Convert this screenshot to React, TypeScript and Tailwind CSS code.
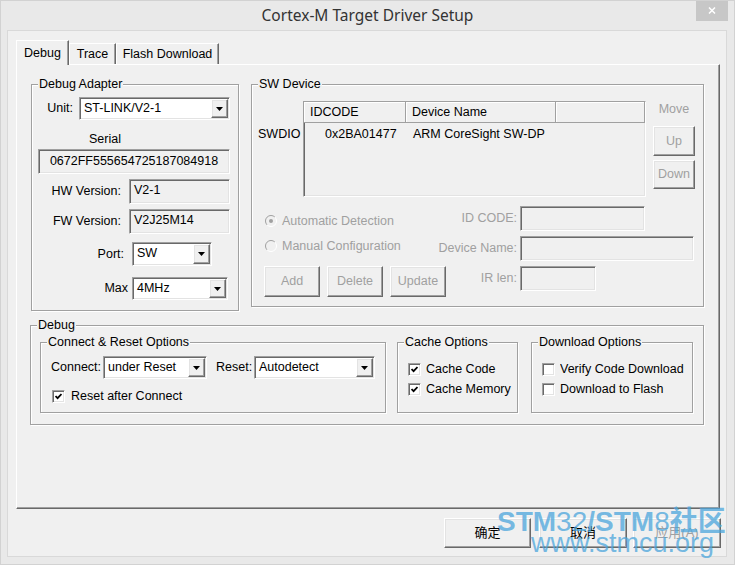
import React from 'react';

// classic 3D edges
const SUNKEN =
  'border border-t-[#a0a0a0] border-l-[#a0a0a0] border-r-white border-b-white shadow-[inset_1px_1px_0_#696969,inset_-1px_-1px_0_#e3e3e3]';
const RAISED =
  'border border-t-white border-l-white border-r-[#696969] border-b-[#696969] shadow-[inset_-1px_-1px_0_#a0a0a0,inset_1px_1px_0_#e3e3e3]';

function Group({ label, className, children }: { label: string; className: string; children?: React.ReactNode }) {
  return (
    <div className={`relative border border-[#a0a0a0] shadow-[inset_1px_1px_0_#fff,1px_1px_0_#fff] ${className}`}>
      <span className="absolute left-[6px] -top-[9px] bg-[#f0f0f0] px-px leading-[16px] whitespace-nowrap">{label}</span>
      {children}
    </div>
  );
}

function Combo({ value, className }: { value: string; className: string }) {
  return (
    <div className={`${SUNKEN} flex bg-white p-px ${className}`}>
      <span className="flex-1 overflow-hidden whitespace-nowrap pl-[3px] leading-[19px]">{value}</span>
      <span className={`${RAISED} flex w-[17px] items-center justify-center bg-[#f0f0f0]`}>
        <svg width="7" height="4" viewBox="0 0 7 4">
          <path d="M0 0h7L3.5 4z" fill="#000" />
        </svg>
      </span>
    </div>
  );
}

function Btn({ label, className, disabled }: { label: string; className: string; disabled?: boolean }) {
  return (
    <div
      className={`${RAISED} flex items-center justify-center bg-[#f0f0f0] ${disabled ? 'text-[#a0a0a0]' : 'text-black'} ${className}`}
    >
      {label}
    </div>
  );
}

function Check({ checked, label, labelClass }: { checked: boolean; label: string; labelClass?: string }) {
  return (
    <div className="flex h-[20px] items-center">
      <div className={`${SUNKEN} flex h-[13px] w-[13px] shrink-0 items-center justify-center bg-white`}>
        {checked && (
          <svg width="7" height="7" viewBox="0 0 7 7">
            <polyline points="0.5,3 2.6,5.2 6.5,1" fill="none" stroke="#000" strokeWidth="1.8" />
          </svg>
        )}
      </div>
      <span className={`ml-[5px] whitespace-nowrap ${labelClass ?? ''}`}>{label}</span>
    </div>
  );
}

function Radio({ checked, label }: { checked: boolean; label: string }) {
  return (
    <div className="flex items-center leading-[16px] text-[#a0a0a0]">
      <svg width="12" height="12" viewBox="0 0 12 12">
        <circle cx="6" cy="6" r="5.5" fill="#f0f0f0" />
        <path d="M2.1 9.9A5.5 5.5 0 0 1 9.9 2.1" stroke="#a0a0a0" fill="none" />
        <path d="M9.9 2.1A5.5 5.5 0 0 1 2.1 9.9" stroke="#fff" fill="none" />
        {checked && <circle cx="6" cy="6" r="2" fill="#a0a0a0" />}
      </svg>
      <span className="ml-[5px] whitespace-nowrap">{label}</span>
    </div>
  );
}

function Tab({ label, active, className }: { label: string; active?: boolean; className: string }) {
  return (
    <div
      className={`flex items-center justify-center border-t border-l border-r border-t-white border-l-white border-r-[#696969] bg-[#f0f0f0] shadow-[inset_-1px_0_0_#a0a0a0] ${
        active ? 'relative z-10 -mb-px h-[25px]' : 'h-[21px]'
      } ${className}`}
    >
      {label}
    </div>
  );
}

function DebugAdapter() {
  return (
    <Group label="Debug Adapter" className="h-[227px] w-[208px]">
      <div className="mt-[12px] flex h-[23px] items-center">
        <span className="w-[41px] text-right">Unit:</span>
        <Combo value="ST-LINK/V2-1" className="ml-[6px] h-[23px] w-[151px]" />
      </div>
      <div className="mt-[11px] pl-[57px] leading-[16px]">Serial</div>
      <div className={`${SUNKEN} mt-[2px] ml-[6px] flex h-[25px] w-[192px] items-center justify-center`}>
        0672FF555654725187084918
      </div>
      <div className="mt-[5px] flex h-[25px] items-center">
        <span className="w-[89px] text-right">HW Version:</span>
        <div className={`${SUNKEN} ml-[8px] h-[25px] w-[101px] pl-[4px] pt-[2px] leading-[16px]`}>V2-1</div>
      </div>
      <div className="mt-[5px] flex h-[25px] items-center">
        <span className="w-[89px] text-right">FW Version:</span>
        <div className={`${SUNKEN} ml-[8px] h-[25px] w-[101px] pl-[4px] pt-[2px] leading-[16px]`}>V2J25M14</div>
      </div>
      <div className="mt-[8px] flex h-[24px] items-center">
        <span className="w-[92px] text-right">Port:</span>
        <Combo value="SW" className="ml-[8px] h-[24px] w-[80px]" />
      </div>
      <div className="mt-[11px] flex h-[23px] items-center">
        <span className="w-[96px] text-right">Max</span>
        <Combo value="4MHz" className="ml-[4px] h-[23px] w-[96px]" />
      </div>
    </Group>
  );
}

function SwDevice() {
  const grey = 'text-[#a0a0a0]';
  const field = `${SUNKEN} h-[25px] bg-[#f0f0f0]`;
  return (
    <Group label="SW Device" className="ml-[12px] h-[223px] w-[453px]">
      <div className="mt-[16px] flex items-start pl-[6px]">
        <span className="mt-[25px] w-[45px] leading-[16px]">SWDIO</span>
        <div className={`${SUNKEN} h-[96px] w-[343px] bg-[#f0f0f0]`}>
          <div className="flex h-[21px]">
            {[
              ['IDCODE', 'w-[102px]'],
              ['Device Name', 'w-[150px]'],
              ['', 'flex-1'],
            ].map(([h, w], i) => (
              <div
                key={i}
                className={`${w} flex items-center border-r border-b border-[#a0a0a0] pl-[6px] pt-px shadow-[inset_1px_1px_0_#fff]`}
              >
                {h}
              </div>
            ))}
          </div>
          <div className="mt-[3px] flex leading-[16px]">
            <span className="w-[102px] pl-[21px]">0x2BA01477</span>
            <span className="pl-[7px]">ARM CoreSight SW-DP</span>
          </div>
        </div>
        <div className="ml-[7px] flex w-[42px] flex-col">
          <span className={`text-center leading-[16px] ${grey}`}>Move</span>
          <Btn label="Up" disabled className="mt-[9px] h-[30px]" />
          <Btn label="Down" disabled className="mt-[4px] h-[29px]" />
        </div>
      </div>

      <div className="mt-[9px] flex h-[25px]">
        <div className="flex-1 pl-[13px] pt-[7px]">
          <Radio checked label="Automatic Detection" />
        </div>
        <span className={`flex items-center whitespace-nowrap ${grey}`}>ID CODE:</span>
        <div className={`${field} ml-[3px] mr-[58px] w-[125px]`} />
      </div>
      <div className="mt-[5px] flex h-[25px]">
        <div className="flex-1 pl-[13px] pt-[2px]">
          <Radio checked={false} label="Manual Configuration" />
        </div>
        <span className={`flex items-center whitespace-nowrap ${grey}`}>Device Name:</span>
        <div className={`${field} ml-[3px] mr-[9px] w-[174px]`} />
      </div>
      <div className="mt-[5px] flex items-start">
        <div className="flex flex-1 gap-[7px] pl-[12px]">
          {['Add', 'Delete', 'Update'].map((b) => (
            <Btn key={b} label={b} disabled className="h-[31px] w-[56px]" />
          ))}
        </div>
        <span className={`flex h-[25px] items-center whitespace-nowrap ${grey}`}>IR len:</span>
        <div className={`${field} ml-[3px] mr-[107px] w-[76px]`} />
      </div>
    </Group>
  );
}

function DebugOptions() {
  return (
    <Group label="Debug" className="mt-[14px] ml-[13px] h-[100px] w-[674px]">
      <div className="mt-[16px] flex pl-[9px]">
        <Group label="Connect & Reset Options" className="h-[71px] w-[346px]">
          <div className="mt-[13px] flex h-[23px] items-center pl-[10px]">
            <span className="w-[52px] whitespace-nowrap">Connect:</span>
            <Combo value="under Reset" className="h-[23px] w-[104px]" />
            <span className="ml-[9px] w-[38px]">Reset:</span>
            <Combo value="Autodetect" className="h-[23px] w-[121px]" />
          </div>
          <div className="mt-[7px] pl-[11px]">
            <Check checked label="Reset after Connect" labelClass="ml-[6px]" />
          </div>
        </Group>
        <Group label="Cache Options" className="ml-[11px] h-[71px] w-[121px]">
          <div className="mt-[16px] pl-[10px]">
            <Check checked label="Cache Code" />
            <Check checked label="Cache Memory" />
          </div>
        </Group>
        <Group label="Download Options" className="ml-[13px] h-[71px] w-[162px]">
          <div className="mt-[16px] pl-[10px]">
            <Check checked={false} label="Verify Code Download" labelClass="w-[130px] overflow-hidden" />
            <Check checked={false} label="Download to Flash" />
          </div>
        </Group>
      </div>
    </Group>
  );
}

export default function App() {
  return (
    <div className="relative h-[565px] w-[735px] overflow-hidden border border-[#d2d2d2] bg-[#e9e9e9] font-['Liberation_Sans',Arial,sans-serif] text-[12.5px] text-black">
      {/* title bar */}
      <div className="relative flex h-[29px] items-center justify-center font-['Noto_Sans',sans-serif] text-[15.5px] text-[#333]">
        Cortex-M Target Driver Setup
        <div className="absolute right-[6px] -top-px flex h-[21px] w-[32px] items-center justify-center bg-[#c7c7c7]">
          <svg width="8" height="7" viewBox="0 0 8 7">
            <path d="M1 0.5l6 6M7 0.5l-6 6" stroke="#fff" strokeWidth="1.5" />
          </svg>
        </div>
      </div>

      {/* client area */}
      <div className="ml-[6px] flex h-[527px] w-[720px] flex-col border border-[#d9d9d9] bg-[#f0f0f0]">
        <div className="mt-[10px] ml-[8px] flex h-[23px] items-end">
          <Tab label="Debug" active className="w-[53px]" />
          <Tab label="Trace" className="w-[47px]" />
          <Tab label="Flash Download" className="w-[103px]" />
        </div>

        <div className="ml-[8px] flex h-[445px] w-[704px] flex-col border border-t-white border-l-white border-r-[#696969] border-b-[#696969] shadow-[inset_-1px_-1px_0_#a0a0a0]">
          <div className="mt-[19px] ml-[14px] flex items-start">
            <DebugAdapter />
            <SwDevice />
          </div>
          <DebugOptions />
        </div>

        <div className="mt-[9px] flex justify-end pr-[5px] font-['Liberation_Sans','Noto_Sans_CJK_SC',sans-serif] text-[13px]">
          <Btn label="确定" className="h-[30px] w-[87px]" />
          <Btn label="取消" className="ml-[8px] h-[30px] w-[88px]" />
          <Btn label="应用(A)" disabled className="ml-[6px] h-[30px] w-[88px]" />
        </div>
      </div>

      {/* site watermark */}
      <div className="pointer-events-none absolute left-[496px] top-[504px] font-['Liberation_Sans',Arial,sans-serif] leading-none text-[#4ca6dc]/75">
        <div className="whitespace-nowrap text-[28px] font-bold">
          STM<span className="font-normal">32</span>/STM<span className="font-normal">8</span>
          <span className="font-['Noto_Sans_CJK_SC',sans-serif]">社区</span>
        </div>
        <div className="ml-[34px] -mt-[6px] whitespace-nowrap text-[27px]">www.stmcu.org</div>
      </div>
    </div>
  );
}
